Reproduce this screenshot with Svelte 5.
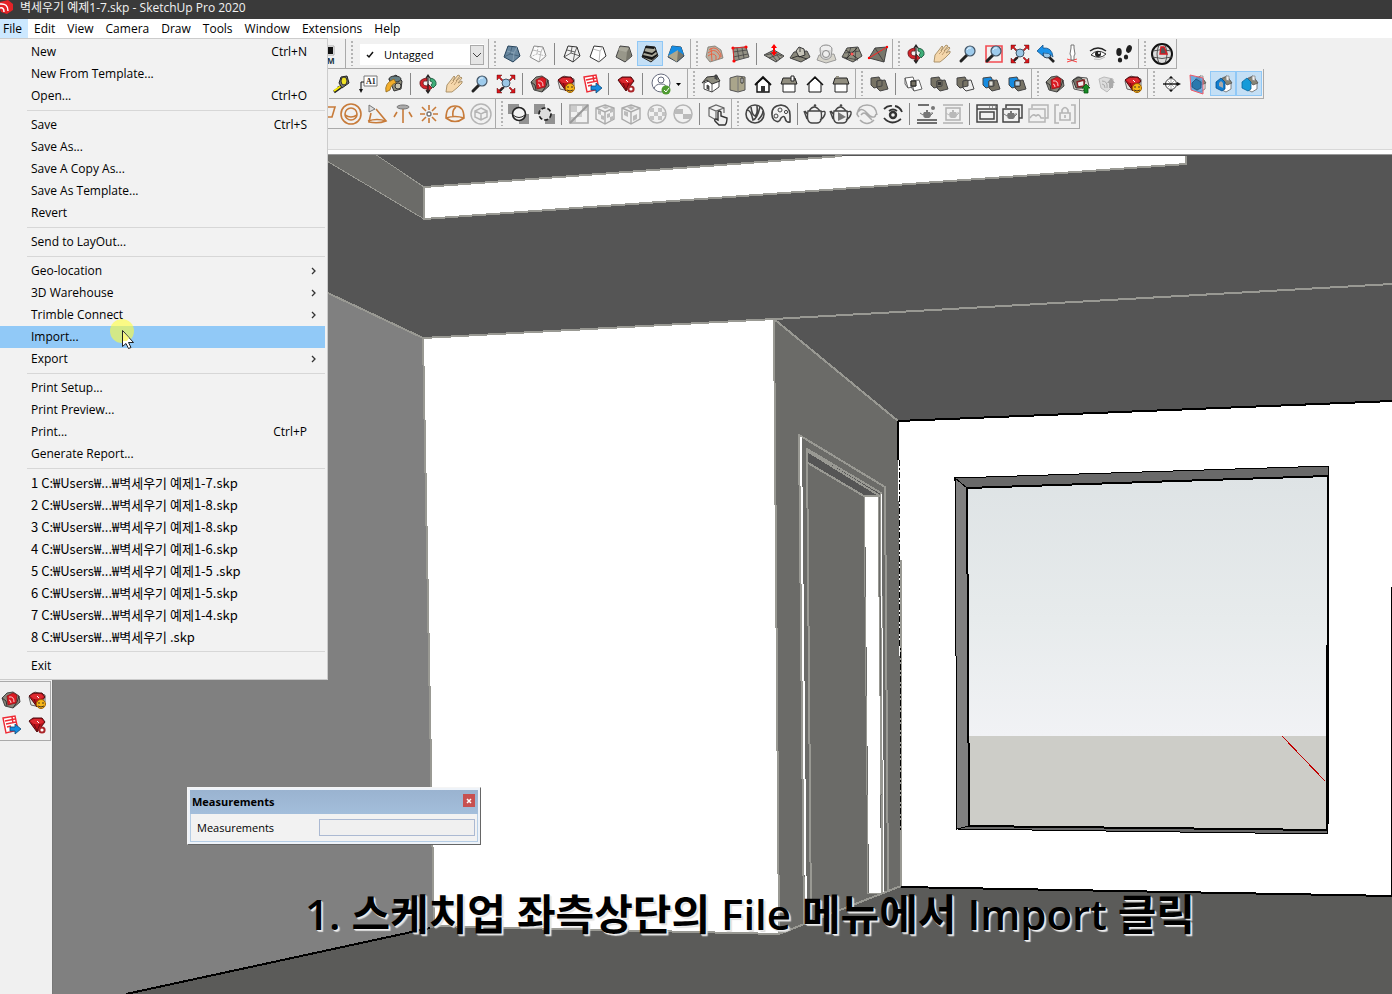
<script lang="ts">
  type Entry = { label: string; keys?: string; sub?: boolean; recent?: boolean };
  type Bar = { groups: string[][]; grip?: boolean; tag?: boolean; account?: boolean };

  const menus = ['File', 'Edit', 'View', 'Camera', 'Draw', 'Tools', 'Window', 'Extensions', 'Help'];

  const fileMenu: Entry[][] = [
    [{ label: 'New', keys: 'Ctrl+N' }, { label: 'New From Template...' }, { label: 'Open...', keys: 'Ctrl+O' }],
    [{ label: 'Save', keys: 'Ctrl+S' }, { label: 'Save As...' }, { label: 'Save A Copy As...' }, { label: 'Save As Template...' }, { label: 'Revert' }],
    [{ label: 'Send to LayOut...' }],
    [{ label: 'Geo-location', sub: true }, { label: '3D Warehouse', sub: true }, { label: 'Trimble Connect', sub: true }, { label: 'Import...' }, { label: 'Export', sub: true }],
    [{ label: 'Print Setup...' }, { label: 'Print Preview...' }, { label: 'Print...', keys: 'Ctrl+P' }, { label: 'Generate Report...' }],
    ['1-7.skp', '1-8.skp', '1-8.skp', '1-6.skp', '1-5 .skp', '1-5.skp', '1-4.skp', ''].map((end, i) => ({
      label: `${i + 1} C:₩Users₩...₩벽세우기 ${end ? '예제' + end : '.skp'}`,
      recent: true
    })),
    [{ label: 'Exit' }]
  ];

  let openMenu = $state('File');
  let hovered = $state('Import...');
  let measurement = $state('');

  const rows: Bar[][] = [
    [
      { groups: [['Match']] },
      { groups: [], grip: true, tag: true },
      { grip: true, groups: [['X-ray', 'Back edges'], ['Wireframe', 'Hidden line', 'Shaded', 'Shaded with textures', 'Monochrome']] },
      { grip: true, groups: [['From contours', 'From scratch'], ['Smoove', 'Stamp', 'Drape', 'Add detail', 'Flip edge']] },
      { grip: true, groups: [['Orbit', 'Pan', 'Zoom', 'Zoom window', 'Zoom extents', 'Previous', 'Position camera', 'Look around', 'Walk']] },
      { grip: true, groups: [['Globe']] }
    ],
    [
      { groups: [['Tape measure', 'Text', 'Paint bucket'], ['Orbit', 'Pan', 'Zoom', 'Zoom extents'], ['3D Warehouse', 'Extension Warehouse', 'LayOut'], ['Extension manager'], []], account: true },
      { grip: true, groups: [['Iso', 'Top', 'Front', 'Right', 'Back', 'Left']] },
      { grip: true, groups: [['Outer shell'], ['Intersect', 'Union', 'Subtract', 'Trim', 'Split']] },
      { grip: true, groups: [['3D Warehouse', 'Share model', 'Share component', 'Extension Warehouse']] },
      { grip: true, groups: [['Section plane', 'Display section planes', 'Display section cuts', 'Display section fill']] }
    ],
    [
      { groups: [['Rectangle light', 'Sphere light', 'Spot light', 'IES light', 'Omni light', 'Dome light', 'Mesh light']] },
      { grip: true, groups: [['Solid widget', 'Hidden widget'], ['Remove texture', 'Tri-planar', 'Box map', 'Spherical map', 'UV map'], ['Place proxy']] },
      { grip: true, groups: [['V-Ray', 'Asset editor'], ['Render', 'Interactive render', 'Cloud render', 'Vision'], ['Viewport render', 'Render region'], ['Frame buffer', 'Batch render', 'Batch cloud', 'Lock camera']] }
    ]
  ];

  const active = ['Shaded with textures', 'Display section cuts', 'Display section fill'];

  // shared icon fragments, all on a 24px grid
  const box = 'M8 4L17 5L20 14L13 20L4 15Z';
  const lens = '<path d="M11 13L5 19" stroke="#222" stroke-width="3" stroke-linecap="round"/><circle cx="14" cy="9" r="5" fill="#9ecbec" stroke="#456" stroke-width="1.2"/><path d="M11 8q1-3 4-2" stroke="#e8f6ff"/>';
  const terrain = '<path d="M7 6L18 5L22 14L13 20L2 15Z" fill="#918f80" stroke="#444"/><path d="M5 11L20 9M3 15L18 18M11 5L7 17M16 5L15 19" stroke="#444" stroke-width=".8"/>';
  const red3d = '<path d="M3 10L8 5L14 4L20 8L21 14L14 20L6 18Z" fill="#88867a" stroke="#444"/><path d="M3 10L7 13L8 18M20 8L18 14L14 20" stroke="#333"/><path d="M8 8L14 5L18 7L17 15L9 17Z" fill="#dc1b23" stroke="#8e1519" stroke-width=".8"/><path d="M10 9q5-1 5 5M10 12q2 0 2 3" stroke="#fff" stroke-width=".8"/>';
  const pot = '<path d="M5 9Q3 21 9 21H14Q20 21 18 9ZM5 13L2 9M1 9L4 17M18 10Q23 8 22 12T17 18M6 9Q11 1 17 9" fill="none" stroke="#444" stroke-width="1.4"/><circle cx="12" cy="3.500" r="1.300" fill="#444"/>';
  const miniPot = '<path d="M9 10h6l1 2q0 3-2 4h-4q-2-1-2-4z" fill="#777"/><path d="M8 13L5 11M16 11h2l-3 3" stroke="#777"/><path d="M11 9h2" stroke="#777" stroke-width="2"/>';
  const arrows4 = '<g fill="#d9161c" stroke="#400" stroke-width=".4"><path d="M3 3h5l-2 2 3 3-1 1-3-3-2 2z"/><path d="M21 3h-5l2 2-3 3 1 1 3-3 2 2z"/><path d="M3 21h5l-2-2 3-3-1-1-3 3-2-2z"/><path d="M21 21h-5l2-2-3-3 1-1 3 3 2-2z"/></g>';
  const cubes = (a: string, b: string) =>
    `<path d="M4 6L12 5L13 7L15 14L7 16L4 13Z" fill="${a}" stroke="#444"/><path d="M10 9L18 8L21 17L13 19L10 16Z" fill="${b}" stroke="#444"/><path d="M10 9L15 8L15 14L10 15Z" fill="#777365" stroke="#444"/>`;
  const gem = '<path d="M4 8L8 5H17L20 9L12 19Z" fill="#b9121a" stroke="#4b0b0e"/><path d="M5 8L9 6L16 6L19 9L15 11L9 11Z" fill="#dd2a30"/><path d="M12 8L14 10" stroke="#fff"/><path d="M9 11L12 18L15 11" stroke="#6d0b10"/>';
  const smiley = '<circle cx="16" cy="16" r="4.500" fill="#f7b718" stroke="#a06000"/><path d="M14 14v2M18 14v2M13 18q3 2 6 0" stroke="#432"/>';
  const orange = 'fill="none" stroke="#c77b3a" stroke-width="1.6"';
  const faint = 'fill="none" stroke="#b5b5b5" stroke-width="1.5"';
  const hex = '<path d="M12 3L21 6V17L12 22L3 17V6ZM3 6L12 10L21 6M12 10V22" fill="none" stroke="#aaa" stroke-width="1.4"/>';
  const sideHouse = '<path d="M11 6L16 4L20 10V17L15 20L9 17Z" fill="#fff" stroke="#666" stroke-width=".8"/><path d="M11 7L16 4L21 11L16 13Z" fill="#898675" stroke="#555" stroke-width=".8"/><path d="M15 4h3v5l-3-1z" fill="#eee" stroke="#888" stroke-width=".8"/>';

  const icons: Record<string, string> = {
    Match: '<path d="M6 4h9v9H6z" fill="#fff" stroke="#aaa"/><path d="M5 5h9v7H5z" fill="#111"/><text x="8" y="22" font-family="Liberation Sans" font-size="9" font-weight="bold" fill="#234">M</text>',
    'X-ray': `<path d="${box}" fill="#68879f" stroke="#26435b"/><path d="M4 15L10 12L19 14M10 12L12 5" stroke="#405d74" stroke-width=".8"/><path d="M7 9L14 11L17 5M14 11L13 19" stroke="#8da6b9" stroke-width=".8"/>`,
    'Back edges': `<path d="${box}" fill="#fafafa" stroke="#888"/><path d="M4 15L11 12L20 14M11 12L12 5" stroke="#bbb" stroke-dasharray="2 1"/><path d="M7 8L15 10L17 5M15 10L13 20" stroke="#aaa" stroke-width=".8"/>`,
    Wireframe: `<path d="${box}" stroke="#333"/><path d="M4 15L11 11L20 14M11 11L12 5M7 8L15 10L17 5M15 10L13 20" stroke="#444" stroke-width=".8"/>`,
    'Hidden line': `<path d="${box}" fill="#fff" stroke="#333"/><path d="M7 7L14 9L13 20M14 9L17 5" stroke="#aaa" stroke-width=".8"/>`,
    Shaded: `<path d="${box}" fill="#98978a" stroke="#444"/><path d="M8 5L17 6L14 10L6 8Z" fill="#aaa99c"/><path d="M15 10L17 6L19 14L14 19Z" fill="#77766b"/>`,
    'Shaded with textures': `<path d="${box}" fill="#aaa99a" stroke="#222"/><path d="M8 4L17 5L16 7L7 6ZM6 9L14 11L18 8V10L14 13L6 11ZM5 13L14 15L19 12V14L14 18L4 15Z" fill="#161616"/>`,
    Monochrome: `<path d="${box}" fill="#77766b" stroke="#345"/><path d="M8 4L17 5L20 13L14 9L4 14Z" fill="#168ce2"/><path d="M4 14L14 8L13 20Z" fill="#b0a78c"/>`,
    'From contours': '<path d="M6 5L13 4L19 8L21 16L8 20L4 15Z" fill="#b8b0a2" stroke="#7b7770" stroke-width=".8"/><path d="M7 8q5-4 9 0t3 7M6 11q6-5 10 0t0 6M6 14q5-4 8 0v4M9 6L10 19" stroke="#ed5c3b" stroke-width=".9"/>',
    'From scratch': '<path d="M5 6L18 5L21 15L6 19Z" fill="#929083" stroke="#555"/><path d="M5 10L19 8M5 15L20 12M9 6L11 17M14 6L16 16" stroke="#444" stroke-width=".8"/><g fill="#f00"><circle cx="5" cy="6" r="1.600"/><circle cx="18" cy="5" r="1.600"/><circle cx="6" cy="19" r="1.600"/></g><path d="M5 6L6 19M5 6L18 5" stroke="#f22" stroke-width=".8"/>',
    Smoove: '<path d="M12 8L22 14L14 20L2 13Z" fill="#98968a" stroke="#444"/><path d="M4 13L12 11L20 14M7 16L15 13L18 17M8 11L15 19" stroke="#333" stroke-width=".7"/><path d="M12 2L15 6H13V10H15L12 14L9 10H11V6H9Z" fill="#f00"/>',
    Stamp: '<path d="M6 10L19 9L22 15L13 20L2 16Z" fill="#8a887b" stroke="#444"/><path d="M8 9L11 5L16 7L17 13L11 15Z" fill="#c7c5b9" stroke="#333"/><path d="M4 16L10 14L19 17M12 6V10" stroke="#222" stroke-width=".8"/>',
    Drape: '<path d="M5 13L20 12L22 18L12 21L3 18Z" fill="#d6d4cb" stroke="#888" stroke-width=".8"/><ellipse cx="12" cy="7" rx="6" ry="4" fill="#eee" stroke="#888"/><path d="M6 8L7 15Q12 20 17 15L18 8" fill="#ddd" stroke="#999"/><circle cx="12" cy="12" r="3.500" fill="#eee" stroke="#888"/>',
    'Add detail': `${terrain}<path d="M6 8L18 17M17 6L6 17" stroke="#222" stroke-width=".8"/><circle cx="12" cy="12" r="1.500" fill="#f55"/>`,
    'Flip edge': '<path d="M9 6L21 5L18 20L3 16Z" fill="#77766a" stroke="#444"/><path d="M9 6L18 20" stroke="#444"/><path d="M3 16L21 5" stroke="#f22"/><circle cx="3" cy="16" r="1.200" fill="#f00"/><circle cx="21" cy="5" r="1.200" fill="#f00"/>',
    Orbit: '<path d="M11 6Q3 7 4 12T11 17V20L16 16L12 12V14Q7 14 7 11T11 9Z" fill="#d5232a" stroke="#601015" stroke-width=".8"/><path d="M14 6Q21 7 20 13L17 16L15 13Q18 10 14 9Z" fill="#3eae78" stroke="#134b31" stroke-width=".8"/><path d="M12 4V20M10 6L12 3L14 6M10 18L12 21L14 18" stroke="#222" stroke-width="1.2"/>',
    Pan: '<path d="M4 20L5 13L9 8L12 4L13 5L11 9L16 3L18 4L14 9L19 5L20 6L16 11L20 9L20 11L15 16L10 20Z" fill="#f5d7ab" stroke="#a58b62" stroke-width=".9"/><path d="M12 9L9 12M15 9L12 13" stroke="#b28e62" stroke-width=".8"/>',
    Zoom: lens,
    'Zoom window': `<path d="M4 4H20V20H4Z" stroke="#f24b52" stroke-width="1.6"/>${lens}`,
    'Zoom extents': `${arrows4}<path d="M10 15L6 19" stroke="#222" stroke-width="2"/><circle cx="12" cy="11" r="4" fill="#9bc7e6" stroke="#456"/>`,
    Previous: '<path d="M15 15L20 20" stroke="#222" stroke-width="2.600"/><circle cx="13" cy="12" r="4" fill="#9bc7e6" stroke="#345"/><path d="M3 9L9 3V6Q18 5 19 15Q15 10 9 11V14Z" fill="#1a92ea" stroke="#17548a" stroke-width=".8"/>',
    'Position camera': '<path d="M7 20L17 17M7 17L17 20" stroke="#f44"/><path d="M11 6V3h3v3l1 6-1 2v4h-3v-4l-1-2z" fill="#fff" stroke="#666" stroke-width=".9"/>',
    'Look around': '<path d="M4 9Q12 3 20 9" stroke="#222" stroke-width="1.5"/><path d="M5 13Q11 6 20 12Q14 18 5 13Z" fill="#fff" stroke="#333"/><circle cx="12" cy="12" r="3" fill="#222"/><circle cx="13" cy="11" r="1" fill="#fff"/><path d="M8 17q6 2 11-2" stroke="#bbb"/>',
    Walk: '<g fill="#202020"><ellipse cx="7" cy="10" rx="2.700" ry="4"/><ellipse cx="8" cy="18" rx="2.200" ry="2.500"/><ellipse cx="17" cy="7" rx="2.700" ry="4" transform="rotate(20 17 7)"/><ellipse cx="14" cy="15" rx="2.200" ry="2.500"/></g>',
    Globe: '<circle cx="12" cy="12" r="10" fill="#ddd" stroke="#111" stroke-width="2"/><path d="M3 9Q12 6 21 9M2 15Q12 18 22 15M9 3Q5 12 9 21M15 3Q19 12 15 21" stroke="#444" stroke-width=".9"/><path d="M11 5h3l3 7h-7z" fill="#555" stroke="#d71920" stroke-width="1.4"/>',
    'Tape measure': '<path d="M11 15L4 20M8 16L12 14" stroke="#222" stroke-width="3"/><path d="M11 14L4 19" stroke="#f7ea00" stroke-width="2"/><path d="M11 5L17 4L19 11L12 16L9 11Z" fill="#777" stroke="#222"/><ellipse cx="14" cy="9" rx="3" ry="4" fill="#f1e326" stroke="#333"/>',
    Text: '<path d="M8 4H21V14H8Z" fill="#fff" stroke="#777"/><text x="10" y="12" font-family="Liberation Serif" font-size="8" font-weight="bold" fill="#222">A1</text><path d="M8 10H5V18" stroke="#111"/><path d="M3 17H7L5 21Z" fill="#111"/>',
    'Paint bucket': '<path d="M7 7L14 3L20 9L19 17L12 19Z" fill="#8e8c79" stroke="#333"/><ellipse cx="13" cy="7" rx="6" ry="3" fill="#667f84" stroke="#333"/><path d="M4 20Q2 11 12 7L14 11Q9 12 8 18Z" fill="#f2ae2b" stroke="#906615" stroke-width=".8"/><circle cx="16" cy="14" r="3" fill="#c8c4af" stroke="#333"/>',
    '3D Warehouse': red3d,
    'Extension Warehouse': `<path d="M4 9L10 4L20 7L20 14L15 19L6 17Z" fill="#e2e2dc" stroke="#666"/>${gem}${smiley}`,
    LayOut: '<path d="M4 5L16 3L19 17L7 20Z" fill="#fff" stroke="#ee2b35" stroke-width="1.4"/><path d="M6 8L16 6M7 11L17 9M8 14L12 13M13 4L14 10" stroke="#ee2b35" stroke-width="1.5"/><path d="M11 14H16V11L22 16L16 21V18H11Z" fill="#168be0" stroke="#0d4774" stroke-width=".8"/>',
    'Extension manager': `${gem}<circle cx="17" cy="17" r="2.600" fill="#fff" stroke="#aa2529" stroke-width="2"/>`,
    Iso: '<path d="M5 11L12 8L20 9V15L13 20L5 17Z" fill="#fff" stroke="#444"/><path d="M3 11L8 5L18 4L21 9L13 12L8 8Z" fill="#8d8c7e" stroke="#333"/><path d="M8 17V13L10 14V18M13 12V20M16 7V3H18V8" fill="#555" stroke="#333" stroke-width=".8"/>',
    Top: '<path d="M5 6L12 4L20 5V18L13 20L5 18Z" fill="#aaa58b" stroke="#555"/><path d="M13 4V20" stroke="#777"/><path d="M16 6H18V11H16Z" fill="#fff" stroke="#333"/>',
    Front: '<path d="M6 11V20H18V11L12 6Z" fill="#fff" stroke="#111" stroke-width="1.4"/><path d="M4 13L12 5L20 13" stroke="#111" stroke-width="1.8"/><path d="M10 20V14h4v6" fill="#333"/>',
    Right: '<path d="M6 12V20H18V12" fill="#fff" stroke="#222"/><path d="M4 12L6 6H18L20 12Z" fill="#918e80" stroke="#222"/><path d="M14 4H17V9H14Z" fill="#fff" stroke="#222"/>',
    Back: '<path d="M6 11V20H18V11L12 6Z" fill="#fff" stroke="#111"/><path d="M4 13L12 5L20 13" stroke="#111" stroke-width="1.5"/>',
    Left: '<path d="M6 12V20H18V12" fill="#fff" stroke="#222"/><path d="M4 12L6 6H18L20 12Z" fill="#918e80" stroke="#222"/><path d="M7 4h3v2H7z" fill="#918e80"/>',
    'Outer shell': cubes('#777365', '#777365'),
    Intersect: '<path d="M4 6L12 5L15 14L7 16ZM10 9L18 8L21 17L13 19ZM4 6V12L7 16M10 9V15L13 19" fill="#fff" stroke="#555" stroke-width=".9"/><path d="M10 9h5v5h-5z" fill="#777365" stroke="#222"/>',
    Union: cubes('#777365', '#777365') + '<path d="M11 10h3v3h-3z" fill="#333"/>',
    Subtract: cubes('#777365', '#eee'),
    Trim: cubes('#168be0', '#777365') + '<path d="M10 9h4v5h-4z" fill="#dfdfd8" stroke="#444" stroke-width=".8"/>',
    Split: cubes('#168be0', '#777365') + '<path d="M10 9h5v5h-5z" fill="#bcd5e8" stroke="#333" stroke-width=".8"/>',
    'Share model': '<path d="M3 9L8 5L18 6L20 14L14 19L5 17Z" fill="#d8d7ce" stroke="#555"/><path d="M4 8L10 5L16 9L14 16L7 16Z" fill="#77756b" stroke="#333"/><path d="M8 10L15 8V14L9 15Z" fill="#eee" stroke="#8b2024" stroke-width="1.4"/><path d="M17 12L21 16H19V21H15V16H13Z" fill="#168a24" stroke="#075610" stroke-width=".8"/>',
    'Share component': '<path d="M4 7L9 5L18 7L18 14L12 20L6 16Z" fill="#ddd" stroke="#bbb"/><path d="M7 9q6 0 5 7M7 12q3 0 3 4" stroke="#aaa"/><path d="M16 6L20 11H18V16H14V11H12Z" fill="#aaa"/>',
    'Section plane': '<circle cx="12" cy="12" r="5.500" fill="#fff" stroke="#444"/><path d="M8 8L16 16M16 8L8 16M12 4V20" stroke="#999" stroke-width=".8"/><path d="M4 12H20" stroke="#111" stroke-width="1.4"/><path d="M22 12L18 10V14ZM10 6L12 4L14 6ZM10 18L12 20L14 18Z" fill="#111"/>',
    'Display section planes': `${sideHouse}<path d="M5 3L18 6V22L6 18Z" fill="#4c9ad8" fill-opacity=".8" stroke="#f05a68"/><path d="M7 11L11 7L16 10V16L12 18L7 15Z" fill="#2b79ae" stroke="#244f76" stroke-width=".8"/>`,
    'Display section cuts': `${sideHouse}<path d="M5 10L10 6L14 10V17L11 19L5 16Z" fill="#117ed0" stroke="#064f8d" stroke-width=".8"/><path d="M8 11L10 9L12 11V16L8 14Z" fill="#aaa"/>`,
    'Display section fill': `${sideHouse}<path d="M5 10L10 6L14 10V17L11 19L5 16Z" fill="#159bd9" stroke="#07659c" stroke-width=".8"/>`,
    'Rectangle light': `<path d="M9 5H22L19 15H5Z" ${orange}/>`,
    'Sphere light': `<circle cx="12" cy="12" r="10" ${orange}/><circle cx="12" cy="12" r="6" ${orange}/><path d="M6 13q6 4 12 0" ${orange}/>`,
    'Spot light': `<path d="M6 11L4 20Q13 22 21 19L11 7" ${orange}/><path d="M3 19Q12 16 21 19" ${orange}/><path d="M4 3V10L10 7Z" fill="#ddd" stroke="#777"/>`,
    'IES light': `<path d="M12 7V21M6 10L3 15M18 10L21 15" ${orange}/><ellipse cx="12" cy="5" rx="6" ry="2" fill="#aaa" stroke="#777"/>`,
    'Omni light': `<path d="M12 3V8M12 16V21M3 12H8M16 12H21M5 5L9 9M19 5L15 9M5 19L9 15M19 19L15 15" ${orange}/><circle cx="12" cy="12" r="2" fill="#fff" stroke="#777" stroke-width="1.4"/>`,
    'Dome light': `<path d="M3 16Q3 4 12 4Q21 4 21 16Q12 23 3 16ZM3 16Q12 13 21 16M10 14Q9 8 13 5" ${orange}/>`,
    'Mesh light': `<circle cx="12" cy="12" r="10" ${faint}/><path d="M12 6L18 9V15L12 18L6 15V9ZM6 9L12 12L18 9M12 12V18" ${faint}/>`,
    'Solid widget': '<path d="M1 2h11v10H1zM12 12h10v10H12z" fill="#929292"/><circle cx="12" cy="12" r="6.500" fill="#f2f2f2" stroke="#222" stroke-width="1.6"/><path d="M6 13Q12 18 18 13" stroke="#222"/>',
    'Hidden widget': '<path d="M1 2h11v10H1zM12 12h10v10H12z" fill="#929292"/><circle cx="12" cy="12" r="6" fill="#ddd" stroke="#222" stroke-width="1.7" stroke-dasharray="4 2"/>',
    'Remove texture': '<path d="M3 3H21V21H3Z" stroke="#aaa" stroke-width="1.6"/><path d="M4 4h6v6H4zM10 10h5v5h-5zM15 4h5v5h-5zM4 15h5v5H4z" fill="#ccc"/><path d="M3 21L21 3" stroke="#999" stroke-width="2"/>',
    'Tri-planar': `${hex}<path d="M5 8l3 1v4l-3-1zM8 13l3 1v4l-3-1zM14 12l3-1v4l-3 1zM17 7l3-1v4l-3 1zM17 15l3-1v4l-3 1zM9 5l4-1 3 2-4 1z" fill="#bbb"/>`,
    'Box map': `${hex}<path d="M5 9l4 1v5l-4-2zM14 14l4-2v5l-4 2zM8 5l4-1 4 2-4 2z" fill="#bbb"/>`,
    'Spherical map': `<circle cx="12" cy="12" r="9" ${faint}/><path d="M5 6h4v4H5zM13 6h4v4h-4zM9 10h4v4H9zM17 10h3v4h-3zM5 14h4v4H5zM13 14h4v4h-4z" fill="#c4c4c4"/>`,
    'UV map': `<circle cx="12" cy="12" r="9" ${faint}/><path d="M4 7h8v5H4zM12 12h8v5h-8z" fill="#bbb"/>`,
    'Place proxy': '<path d="M11 18L4 14V6L11 3L19 6V11M4 6L11 9L19 6M11 9V18" stroke="#666" stroke-width="1.2"/><path d="M13 10v8l-2-1q-2 0-1 2l4 4h6q2-2 2-7l-6-2v-4q-2-2-3 0z" fill="#eee" stroke="#333" stroke-width="1.4"/>',
    'V-Ray': '<circle cx="12" cy="12" r="9" stroke="#444" stroke-width="1.6"/><path d="M4 8Q8 8 10 18Q14 17 17 5M8 5Q9 13 12 14Q15 12 14 4M15 18Q20 13 20 9" stroke="#444" stroke-width="1.6"/>',
    'Asset editor': '<path d="M3 13Q2 4 12 3Q21 4 21 13V20Q17 21 16 16Q15 13 12 16Q10 22 5 18Q3 16 3 13Z" stroke="#444" stroke-width="1.6"/><circle cx="11" cy="8" r="2" stroke="#444"/><circle cx="17" cy="10" r="1.600" stroke="#444"/><circle cx="7" cy="14" r="2" stroke="#444"/>',
    Render: pot,
    'Interactive render': `${pot}<path d="M9 10L17 15L9 19Z" fill="#777"/>`,
    'Cloud render': '<path d="M2 13Q3 3 12 3Q21 3 22 13M4 15Q0 11 4 9Q6 6 10 9L15 14Q20 17 21 12M6 13Q9 9 12 13L17 18M5 18Q12 25 19 18" stroke="#aaa" stroke-width="1.5"/>',
    Vision: '<path d="M3 7Q7 3 11 4M14 4Q19 5 21 10M3 16Q9 23 17 19L20 17M8 9Q12 6 16 9" stroke="#333" stroke-width="1.8"/><circle cx="12" cy="13" r="3" stroke="#333" stroke-width="2.400"/>',
    'Viewport render': `<path d="M3 3H14M2 18H22M2 21H22" stroke="#444" stroke-width="1.5"/>${miniPot}<circle cx="18" cy="6" r="2" fill="#777"/>`,
    'Render region': `<g opacity=".45"><path d="M2 3H22M2 21H22M5 6H19V18H5Z" stroke="#666" stroke-width="1.5"/>${miniPot}</g>`,
    'Frame buffer': '<path d="M2 3H22V20H2ZM2 7H22M5 10H19V17H5Z" stroke="#444" stroke-width="1.5"/><path d="M14 5h1M17 5h1M20 5h1" stroke="#444"/>',
    'Batch render': `<path d="M5 6V3H21V16H18M2 7H18V20H2Z" stroke="#444" stroke-width="1.5"/><g transform="translate(-2 1)">${miniPot}</g>`,
    'Batch cloud': '<path d="M5 6V3H21V16H18M2 7H18V20H2Z" stroke="#b5b5b5" stroke-width="1.5"/><path d="M3 16q3-5 6-2 3-3 5 2h3" stroke="#b5b5b5" stroke-width="1.5"/>',
    'Lock camera': '<path d="M6 3H2V21H6M18 3H22V21H18M7 11H17V18H7ZM9 11V8Q12 3 15 8V11M12 13v3" stroke="#b5b5b5" stroke-width="1.6"/>'
  };
</script>

{#snippet tool(name: string)}
  <button type="button" class="tool" class:on={active.includes(name)} aria-label={name}>
    <svg viewBox="0 0 24 24" fill="none" aria-hidden="true">{@html icons[name]}</svg>
  </button>
{/snippet}

<div class="app">
  <header class="titlebar">
    <svg class="logo" viewBox="0 0 14 15" aria-hidden="true">
      <path d="M0 2L8 0L13 4V10L7 14L1 12L0 9Z" fill="#e32327" />
      <path d="M0 4Q8 3 8 11M0 8Q4 7 4 12" fill="none" stroke="#fff" stroke-width="1.500" />
    </svg>
    <span>벽세우기 예제1-7.skp - SketchUp Pro 2020</span>
  </header>

  <nav class="menubar" aria-label="Main menu">
    {#each menus as name}
      <button type="button" class:open={openMenu === name} onclick={() => (openMenu = openMenu === name ? '' : name)}>{name}</button>
    {/each}
  </nav>

  {#if openMenu === 'File'}
    <div class="filemenu" role="menu">
      {#each fileMenu as section, i}
        {#if i > 0}<div class="rule" role="separator"></div>{/if}
        {#each section as entry}
          <button
            type="button"
            role="menuitem"
            class:hover={hovered === entry.label}
            class:recent={entry.recent}
            onmouseenter={() => (hovered = entry.label)}
          >
            <span>{entry.label}</span>
            {#if entry.keys}<span class="keys">{entry.keys}</span>{/if}
            {#if entry.sub}
              <svg class="chevron" viewBox="0 0 6 8" aria-hidden="true"><path d="M1 1L4 4L1 7" fill="none" stroke="#333" stroke-width="1.300" /></svg>
            {/if}
          </button>
        {/each}
      {/each}
      <svg class="pointer" viewBox="0 0 26 34" aria-hidden="true">
        <circle cx="12" cy="12" r="12" fill="#ffff3c" fill-opacity=".6" />
        <path d="M12.500 11.500V27.500L16 24.500L18.500 29.500L21 28.500L18.500 23.500H23.500Z" fill="#fff" stroke="#222" />
        <path d="M13 13L19 19L17 22H13Z" fill="#fbf77f" />
      </svg>
    </div>
  {/if}

  <div class="toolbars">
    {#each rows as row, r}
      <div class="row row-{r + 1}">
        {#each row as bar}
          <div class="bar" role="toolbar">
            {#if bar.grip}<i class="grip"></i>{/if}
            {#if bar.tag}
              <div class="tag">
                <svg viewBox="0 0 8 8" aria-hidden="true"><path d="M1 4L3 6L7 1" fill="none" stroke="#111" stroke-width="1.500" /></svg>
                <select aria-label="Tag"><option>Untagged</option></select>
                <span class="drop">
                  <svg viewBox="0 0 8 6" aria-hidden="true"><path d="M0 1L4 5L8 1" fill="none" stroke="#444" /></svg>
                </span>
              </div>
            {/if}
            {#each bar.groups as group, g}
              {#if g > 0}<i class="split"></i>{/if}
              {#each group as name}{@render tool(name)}{/each}
            {/each}
            {#if bar.account}
              <button type="button" class="account" aria-label="Account">
                <svg viewBox="0 0 39 24" fill="none" aria-hidden="true">
                  <circle cx="14" cy="11" r="9" fill="#fff" stroke="#666b7d" />
                  <circle cx="14" cy="8" r="3" stroke="#666b7d" />
                  <path d="M7 17Q8 12 14 12T20 17" stroke="#666b7d" />
                  <circle cx="19" cy="18" r="4.500" fill="#4f9b31" />
                  <path d="M17 18L19 20L22 16" stroke="#fff" />
                  <path d="M29 11H34L31.500 14Z" fill="#000" />
                </svg>
              </button>
            {/if}
          </div>
        {/each}
      </div>
    {/each}
  </div>

  <main class="workspace">
    <aside class="dock">
      <div class="dock-tools">
        {@render tool('3D Warehouse')}
        {@render tool('Extension Warehouse')}
        {@render tool('LayOut')}
        {@render tool('Extension manager')}
      </div>
    </aside>

    <section class="viewport" aria-label="Model view">
      <svg class="scene" viewBox="53 154 1339 840" preserveAspectRatio="xMinYMin slice" shape-rendering="crispEdges" aria-hidden="true">
        <defs>
          <linearGradient id="sky" gradientUnits="userSpaceOnUse" x1="0" y1="476" x2="0" y2="736">
            <stop offset="0" stop-color="#dee3e5" />
            <stop offset=".55" stop-color="#e7ebec" />
            <stop offset="1" stop-color="#f1f2f5" />
          </linearGradient>
        </defs>
        <rect x="53" y="154" width="1339" height="840" fill="#555" />

        <!-- ceiling recess -->
        <path d="M300 144L360 144L424 187V219L300 145Z" fill="#6b6b68" stroke="#999993" />
        <path d="M424 187L842 156H1185V164L424 219Z" fill="#fff" />
        <path d="M424 187L842 156M424 219L1186 164V156M424 187V220" fill="none" stroke="#999993" stroke-width="2" />
        <path d="M774 319L1392 284" stroke="#999993" stroke-width="2" />

        <!-- floor and walls -->
        <path d="M126 994L435 927L779 934L901 886L1392 896V994Z" fill="#5b5b59" />
        <path d="M53 163L423 338L435 927L126 994H53Z" fill="#808080" />
        <path d="M423 338L774 319L779 934L435 926Z" fill="#fff" />
        <path d="M774 319L898 421L901 886L779 934Z" fill="#6b6b68" />
        <path d="M898 421L1392 401V896L901 886Z" fill="#fff" />
        <path d="M53 163L423 338L774 319L898 421M423 338L434 926L779 934L901 886M774 319L779 934M901 560V886" fill="none" stroke="#999993" stroke-width="2" />
        <path d="M126 994L430 928M898 421L1392 401M901 887L1392 896" fill="none" stroke="#000" stroke-width="2" />
        <path d="M898 421V460" stroke="#000" stroke-width="2" />
        <path d="M899 460L901 830" stroke="#000" stroke-dasharray="6 2 2 2" />
        <path d="M1391.500 587V896" stroke="#000" />

        <!-- door -->
        <path d="M804 924L799 435L885 487L888 890" fill="none" stroke="#999993" stroke-width="2" />
        <path d="M801 437L806 923" stroke="#fff" stroke-width="2" />
        <path d="M808 450L881 494L864 496L808 463Z" fill="#555" />
        <path d="M811 920L807 449L881 493L883 892M807 451L880 496M808 463L864 496H879" fill="none" stroke="#999993" stroke-width="2" />
        <path d="M865 497H878L881 893H869Z" fill="#fff" />
        <path d="M864 496L868 893H882L878 497" fill="none" stroke="#999993" />
        <path d="M881 494L884 892" stroke="#fff" />

        <!-- window -->
        <path d="M955 478L1329 466L1328 834L957 829Z" fill="#696969" stroke="#000" />
        <path d="M955 478L967 488L969 826L957 829Z" fill="#808080" stroke="#000" />
        <path d="M967 488L1328 476L1327 830L969 826Z" fill="url(#sky)" />
        <path d="M969 736H1327V830L969 826Z" fill="#cdcdc8" />
        <path d="M967 488L1328 476L1327 830L969 826Z" fill="none" stroke="#000" stroke-width="2" />
        <path d="M1282 736L1325 781" stroke="#c00000" />
      </svg>

      <form class="measure" onsubmit={(e) => e.preventDefault()}>
        <div class="measure-title">
          <strong>Measurements</strong>
          <button type="button" aria-label="Close">
            <svg viewBox="0 0 6 6" aria-hidden="true"><path d="M1 1L5 5M5 1L1 5" stroke="#fff" stroke-width="1.500" /></svg>
          </button>
        </div>
        <div class="measure-body">
          <label for="measurement">Measurements</label>
          <input id="measurement" type="text" bind:value={measurement} />
        </div>
      </form>

      <p class="caption">1. 스케치업 좌측상단의 File 메뉴에서 Import 클릭</p>
    </section>
  </main>
</div>

<style>
  :global(body) { margin: 0; background: #f0f0f0; }

  .app {
    position: relative;
    display: flex;
    flex-direction: column;
    min-height: 100vh;
    overflow: hidden;
    background: #f0f0f0;
    color: #000;
    font: 12px/18px "Open Sans", "Noto Sans CJK KR", sans-serif;
  }
  button, input, select { font: inherit; color: inherit; }
  button { margin: 0; padding: 0; border: 0; background: none; }
  svg { display: block; flex: none; }

  .titlebar {
    display: flex;
    align-items: flex-start;
    gap: 6px;
    height: 19px;
    background: #3a3a3a;
    color: #f2f2f2;
    line-height: 16px;
  }
  .logo { width: 14px; height: 15px; }

  .menubar { display: flex; height: 19px; background: #fff; }
  .menubar button { padding: 0 6px; line-height: 19px; }
  .menubar button:first-child { padding-left: 3px; }
  .menubar .open { background: #cce8ff; }

  .filemenu {
    position: absolute;
    z-index: 2;
    top: 38px;
    left: 0;
    box-sizing: border-box;
    width: 328px;
    padding: 2px 2px 2px 0;
    border: 1px solid #ccc;
    border-left: 0;
    background: #f2f2f2;
  }
  .filemenu button {
    display: flex;
    align-items: center;
    width: 100%;
    height: 22px;
    padding: 0 8px 0 31px;
    text-align: left;
  }
  .filemenu .recent { font: 13px/18px "Noto Sans CJK KR", sans-serif; }
  .filemenu .hover { background: #91c9f7; }
  .keys { margin: 0 10px 0 auto; }
  .chevron { width: 6px; height: 8px; margin-left: auto; }
  .rule { height: 1px; margin: 3px 0 3px 27px; background: #d7d7d7; }
  .pointer { position: absolute; top: 280px; left: 110px; width: 26px; height: 34px; pointer-events: none; }

  .toolbars { height: 110px; padding-top: 1px; border-bottom: 1px solid #d8d8d8; }
  .row { display: flex; height: 30px; }
  .row-1 { padding-left: 318px; }
  .row-2 { padding-left: 329px; }
  .row-3 { padding-left: 312px; }
  .bar {
    display: flex;
    align-items: center;
    padding-right: 1px;
    border-right: 1px solid #aaa;
    border-bottom: 1px solid #aaa;
    background: #f1f1f1;
  }
  .grip {
    width: 2px;
    height: 25px;
    margin: 0 3px 0 5px;
    background: repeating-linear-gradient(#b4b4b4 0 2px, transparent 2px 4px);
  }
  .split { width: 1px; height: 22px; margin: 0 4px 0 3px; background: #888; }
  .tool { display: grid; place-items: center; box-sizing: border-box; width: 26px; height: 25px; }
  .tool svg { width: 24px; height: 24px; }
  .tool.on { background: #c4dff5; box-shadow: inset 0 0 0 1px #90c8f6; }
  .account, .account svg { width: 39px; height: 24px; }

  .tag { display: flex; align-items: center; width: 124px; height: 21px; margin: 2px 3px 0 4px; background: #fff; }
  .tag > svg { width: 8px; height: 8px; margin: 0 6px; }
  .tag select {
    flex: 1;
    min-width: 0;
    height: 21px;
    padding: 0 4px;
    border: 0;
    background: none;
    appearance: none;
    font-size: 11px;
  }
  .drop { display: grid; place-items: center; box-sizing: border-box; width: 14px; height: 20px; border: 1px solid #aaa; background: #e5e5e5; }
  .drop svg { width: 8px; height: 6px; }

  .workspace { display: flex; flex: 1; padding-top: 4px; background: linear-gradient(#fff 4px, #f0f0f0 4px); }
  .dock { box-sizing: border-box; width: 53px; padding-top: 527px; border-right: 1px solid #777; }
  .dock-tools {
    display: grid;
    grid-template-columns: 26px 26px;
    width: 52px;
    padding: 5px 0 3px;
    border: solid #aaa;
    border-width: 1px 1px 1px 0;
    margin-left: -2px;
  }
  .viewport { position: relative; flex: 1; min-width: 0; overflow: hidden; border-top: 1px solid #999; }
  .scene { position: absolute; inset: -1px 0 auto; width: 100%; height: calc(100% + 1px); }

  .measure {
    position: absolute;
    top: 632px;
    left: 134px;
    box-sizing: border-box;
    width: 294px;
    padding: 2px;
    border: 1px solid #666;
    border-top-color: #f5f5f5;
    border-left-color: #f5f5f5;
    background: #eef3f9;
    font-size: 11px;
  }
  .measure-title {
    display: flex;
    align-items: center;
    justify-content: space-between;
    height: 24px;
    padding: 0 3px 0 2px;
    background: linear-gradient(#9ab3d0, #a3bedb);
  }
  .measure-title button { display: grid; place-items: center; width: 12px; height: 13px; margin-bottom: 3px; background: #c75050; }
  .measure-title svg { width: 6px; height: 6px; }
  .measure-body {
    display: flex;
    align-items: center;
    justify-content: space-between;
    height: 27px;
    padding: 0 2px 0 6px;
    border: 1px solid #b5cde5;
    border-top: 0;
    background: #f2f2f2;
  }
  .measure-body input { box-sizing: border-box; width: 156px; height: 17px; padding: 0 3px; border: 1px solid #abb9d2; background: #f0f0f0; }

  .caption {
    position: absolute;
    top: 727px;
    left: 0;
    right: 0;
    margin: 0;
    padding-left: 55px;
    color: #000;
    font: 600 42px/64px "Open Sans", "Noto Sans CJK KR", sans-serif;
    text-align: center;
    white-space: nowrap;
    text-shadow: 1px 1px 0 #eee, 2px 2px 1px #ddd;
  }
</style>
